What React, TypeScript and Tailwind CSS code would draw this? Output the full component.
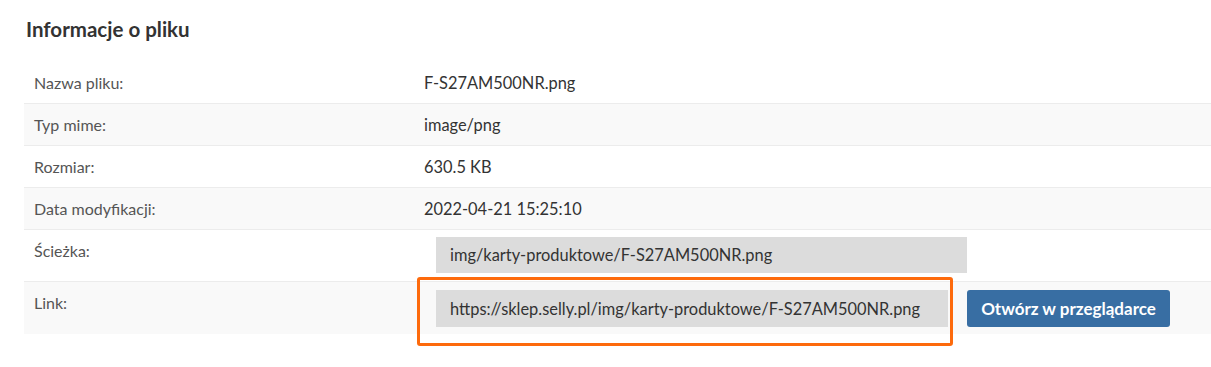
const rows: { label: string; value: string }[] = [
  { label: "Nazwa pliku:", value: "F-S27AM500NR.png" },
  { label: "Typ mime:", value: "image/png" },
  { label: "Rozmiar:", value: "630.5 KB" },
  { label: "Data modyfikacji:", value: "2022-04-21 15:25:10" },
];

export default function App() {
  return (
    <div className="min-h-[367px] bg-white pl-[24px] font-['Lato',sans-serif] text-[16px] text-[#333]">
      <h3 className="pl-[2px] pt-[16px] text-[20.5px] font-bold leading-[26px] text-[#333]">
        Informacje o pliku
      </h3>

      <div className="relative mt-[20px]">
        {rows.map((r, i) => (
          <div
            key={r.label}
            className={`grid h-[42px] grid-cols-[400px_1fr] border-b border-[#ececec] leading-[26px] ${
              i % 2 === 1 ? "bg-[#f9f9f9]" : "bg-white"
            }`}
          >
            <div className="pl-[10px] pt-[8px] text-[#555]">{r.label}</div>
            <div className="pt-[8px] text-[16.4px] text-[#333]">{r.value}</div>
          </div>
        ))}

        {/* Ścieżka */}
        <div className="grid h-[52px] grid-cols-[400px_1fr] border-b border-[#ececec] bg-white leading-[26px]">
          <div className="pl-[10px] pt-[8px] text-[#555]">Ścieżka:</div>
          <div className="pl-[12px] pt-[7px]">
            <div className="flex h-[36px] w-[531px] items-center bg-[#dcdcdc] pl-[14px] text-[16.4px] text-[#333]">
              img/karty-produktowe/F-S27AM500NR.png
            </div>
          </div>
        </div>

        {/* Link */}
        <div className="grid h-[52px] grid-cols-[400px_1fr] bg-[#f9f9f9] leading-[26px]">
          <div className="pl-[10px] pt-[8px] text-[#555]">Link:</div>
          <div className="flex items-start gap-[19px] pl-[12px] pt-[8px]">
            <div className="flex h-[37px] w-[512px] items-center bg-[#dcdcdc] pl-[14px] text-[16.4px] text-[#333]">
              https://sklep.selly.pl/img/karty-produktowe/F-S27AM500NR.png
            </div>
            <button className="h-[37px] w-[203px] rounded-[3px] bg-[#386ea3] text-[17px] font-bold text-white">
              Otwórz w przeglądarce
            </button>
          </div>
        </div>

        {/* annotation frame */}
        <div className="pointer-events-none absolute left-[393px] top-[215px] h-[69px] w-[536px] rounded-[3px] border-[3px] border-[#fd6a0c]" />
      </div>
    </div>
  );
}
